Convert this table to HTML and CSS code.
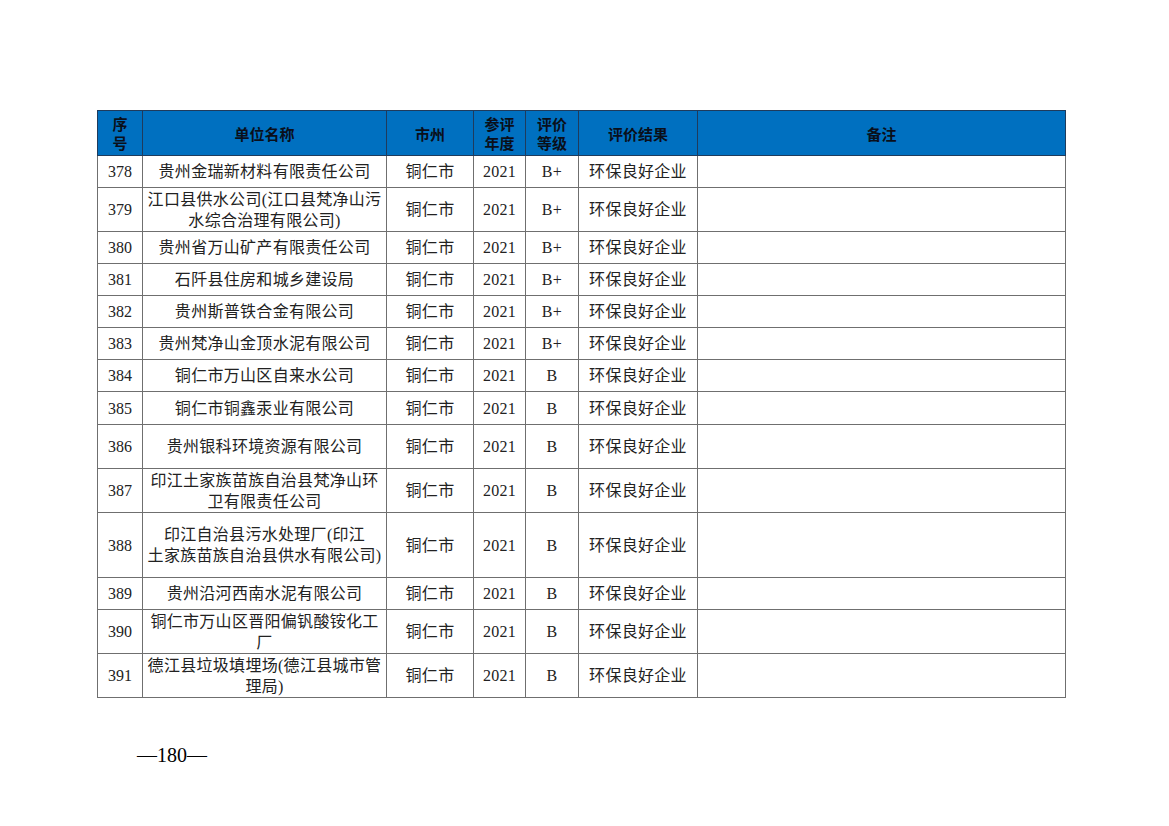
FILE: index.html
```html
<!DOCTYPE html>
<html lang="zh-CN">
<head>
<meta charset="utf-8">
<title>环保良好企业</title>
<link rel="stylesheet" href="styles.css">
</head>
<body>
<div class="page">
  <table class="list">
    <colgroup>
      <col class="c-no"><col class="c-name"><col class="c-city"><col class="c-year"><col class="c-grade"><col class="c-result"><col class="c-note">
    </colgroup>
    <thead>
      <tr class="h-head">
        <th>序<br>号</th><th>单位名称</th><th>市州</th><th>参评<br>年度</th><th>评价<br>等级</th><th>评价结果</th><th>备注</th>
      </tr>
    </thead>
    <tbody>
      <tr class="h32"><td>378</td><td>贵州金瑞新材料有限责任公司</td><td>铜仁市</td><td>2021</td><td>B+</td><td>环保良好企业</td><td></td></tr>
      <tr class="h44"><td>379</td><td>江口县供水公司(江口县梵净山污<br>水综合治理有限公司)</td><td>铜仁市</td><td>2021</td><td>B+</td><td>环保良好企业</td><td></td></tr>
      <tr class="h32"><td>380</td><td>贵州省万山矿产有限责任公司</td><td>铜仁市</td><td>2021</td><td>B+</td><td>环保良好企业</td><td></td></tr>
      <tr class="h32"><td>381</td><td>石阡县住房和城乡建设局</td><td>铜仁市</td><td>2021</td><td>B+</td><td>环保良好企业</td><td></td></tr>
      <tr class="h32"><td>382</td><td>贵州斯普铁合金有限公司</td><td>铜仁市</td><td>2021</td><td>B+</td><td>环保良好企业</td><td></td></tr>
      <tr class="h32"><td>383</td><td>贵州梵净山金顶水泥有限公司</td><td>铜仁市</td><td>2021</td><td>B+</td><td>环保良好企业</td><td></td></tr>
      <tr class="h32"><td>384</td><td>铜仁市万山区自来水公司</td><td>铜仁市</td><td>2021</td><td>B</td><td>环保良好企业</td><td></td></tr>
      <tr class="h33"><td>385</td><td>铜仁市铜鑫汞业有限公司</td><td>铜仁市</td><td>2021</td><td>B</td><td>环保良好企业</td><td></td></tr>
      <tr class="h44"><td>386</td><td>贵州银科环境资源有限公司</td><td>铜仁市</td><td>2021</td><td>B</td><td>环保良好企业</td><td></td></tr>
      <tr class="h44"><td>387</td><td>印江土家族苗族自治县梵净山环<br>卫有限责任公司</td><td>铜仁市</td><td>2021</td><td>B</td><td>环保良好企业</td><td></td></tr>
      <tr class="h65"><td>388</td><td>印江自治县污水处理厂(印江<br>土家族苗族自治县供水有限公司)</td><td>铜仁市</td><td>2021</td><td>B</td><td>环保良好企业</td><td></td></tr>
      <tr class="h32"><td>389</td><td>贵州沿河西南水泥有限公司</td><td>铜仁市</td><td>2021</td><td>B</td><td>环保良好企业</td><td></td></tr>
      <tr class="h44"><td>390</td><td>铜仁市万山区晋阳偏钒酸铵化工<br>厂</td><td>铜仁市</td><td>2021</td><td>B</td><td>环保良好企业</td><td></td></tr>
      <tr class="h44"><td>391</td><td>德江县垃圾填埋场(德江县城市管<br>理局)</td><td>铜仁市</td><td>2021</td><td>B</td><td>环保良好企业</td><td></td></tr>
    </tbody>
  </table>
  <div class="folio">—180—</div>
</div>
</body>
</html>
```

FILE: styles.css
```css
html, body {
  margin: 0;
  padding: 0;
  background: #ffffff;
}

.page {
  width: 1169px;
  height: 826px;
  box-sizing: border-box;
  padding: 110px 0 0 97px;
  font-family: "Liberation Serif", "Noto Sans CJK SC", serif;
  color: #222;
}

.list {
  border-collapse: collapse;
  table-layout: fixed;
  width: 968px;
  border-left: 1px solid #000;
  border-right: 1px solid #000;
  border-bottom: 1px solid #000;
}

.c-no { width: 45px; }
.c-name { width: 244px; }
.c-city { width: 87px; }
.c-year { width: 52px; }
.c-grade { width: 53px; }
.c-result { width: 119px; }
.c-note { width: 368px; }

.list th,
.list td {
  padding: 0;
  text-align: center;
  vertical-align: middle;
  overflow: hidden;
  white-space: nowrap;
}

.list th {
  background: #0070c0;
  border: 1px solid #1f3b5c;
  font-family: "Noto Sans CJK SC", sans-serif;
  font-weight: 700;
  font-size: 15px;
  line-height: 19px;
  color: #0a0f1a;
}

.list td {
  border: 1px solid #6f6f6f;
  font-size: 16px;
  line-height: 21px;
  letter-spacing: 0.3px;
}

.list tbody td:first-child {
  letter-spacing: 0;
}

.h-head { height: 45px; }
.h32 { height: 32px; }
.h33 { height: 33px; }
.h44 { height: 44px; }
.h65 { height: 65px; }

.folio {
  margin: 45px 0 0 40px;
  font-family: "Liberation Serif", serif;
  font-size: 20px;
  line-height: 24px;
  color: #000;
}
```
